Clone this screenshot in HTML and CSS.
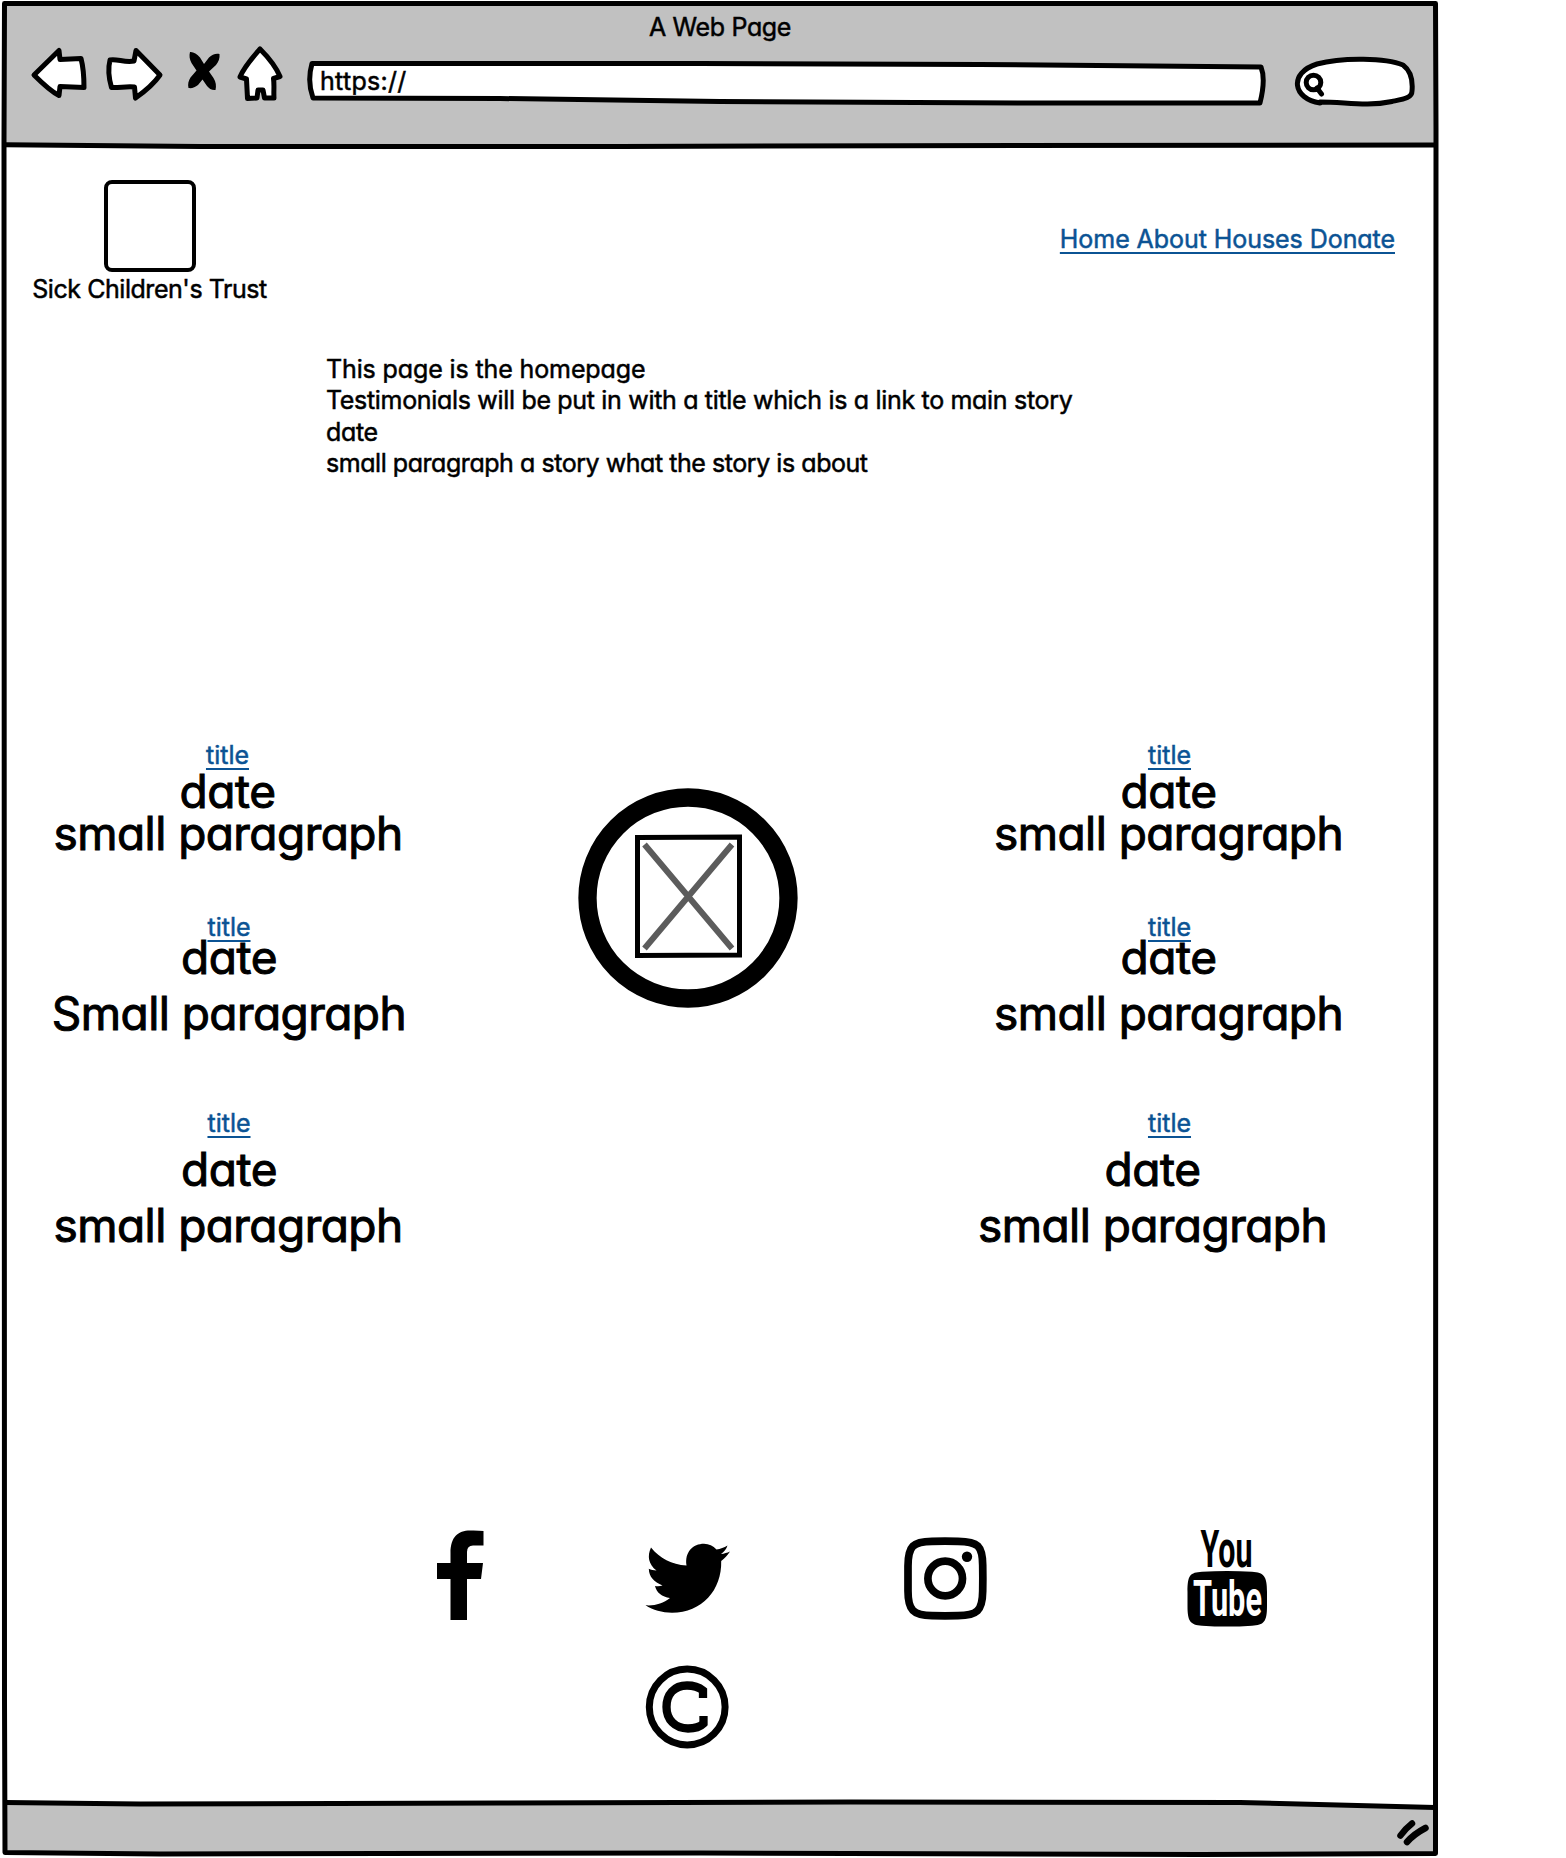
FILE: index.html
```html
<!DOCTYPE html>
<html lang="en">
<head>
<meta charset="utf-8">
<title>A Web Page</title>
<link rel="stylesheet" href="styles.css">
</head>
<body>
<div class="window">
  <svg class="frame" width="1440" height="1858" viewBox="0 0 1440 1858" aria-hidden="true">
    <path class="chrome" d="M4 3H1436V145L800 146L200 146.500L4 144.500Z"/>
    <path class="chrome" d="M4 1802.500L200 1804L700 1802L1240 1802.500L1436 1807.500V1854L700 1854.500L200 1853.500L4 1852.500Z"/>
    <path class="ink" d="M4.500 3.500H1435.500L1436 130L1435.500 1853.500L1200 1854.500L700 1853L160 1854L5 1852.500L4.500 1700L4 140Z"/>
    <path class="ink" d="M5 144.800L200 146.500L620 146.500L900 145.700L1436 145"/>
    <path class="ink" d="M5 1802.500L140 1804L500 1803L850 1802L1240 1802.500L1435 1807.500"/>
    <path class="grip" d="M1400.500 1835.500Q1405 1829 1412 1823.500M1407 1842Q1414 1834 1425.500 1828"/>
  </svg>

  <header class="browser-bar">
    <div class="window-title"><span>A Web Page</span></div>
    <div class="toolbar">
      <svg class="back" width="58" height="56" viewBox="30 46 58 56"><path class="tool" d="M34 75L59 50.500L60 59.500L81 58.500C83 66 84 77 84 87.500L60 86.500L59 95.500C50 91 42 83 34 75Z"/></svg>
      <svg class="forward" width="60" height="56" viewBox="104 46 60 56"><path class="tool" d="M110 60C117 58.500 125 63 134 61L136 50.500L160 75C153 85 144 92 135.500 98L134.500 87C127 86 119 88 111.500 87.500C109 79 108 68 110 60Z"/></svg>
      <svg class="stop" width="34" height="42" viewBox="187 50 34 42"><path d="M190 52C193 51.500 197 54 200 57.500L204 64L209 57.500C212 54.500 216 53 219.500 54C220 58 218.500 62 216 65L209 71.500L213.500 78C216 82 216.500 86 215.500 90C212 90.500 209 88.500 207 86L202.500 79.500L198 85C195 87.500 192 88.500 188.500 88C187.500 84.500 188.500 80.500 190.500 77.500L196.500 70.500L191.500 63C189.500 59.500 189 55.500 190 52Z"/></svg>
      <svg class="home" width="48" height="58" viewBox="236 45 48 58"><path class="tool" d="M260 49C269 58 276 67 280 76.500L273.500 78.500C274.500 85 273.500 92 274 98H264.500L263 90H258L257 98L247.500 98.500L246.500 79L240 77C244 67 253 57 260 49Z"/></svg>
      <div class="address">
        <svg width="960" height="48" viewBox="306 59 960 48"><path class="tool" d="M312 63.500H700L980 64.500L1261 67C1265 77 1263 91 1260 103L1020 103L720 101.500L500 98.500L313 98C309 87 309 74 312 63.500Z"/></svg>
        <span>https://</span>
      </div>
      <svg class="search" width="122" height="52" viewBox="1294 56 122 52"><path class="tool" d="M1320 103C1293 99 1288 73 1317 64C1343 57 1386 58 1403 65C1411 71 1413 80 1412 91C1412 98 1404 99 1392 101.500C1366 107 1346 102 1320 102Z"/><circle class="lens" cx="1313.500" cy="82.500" r="7.300"/><path class="lens" d="M1317 88L1321.500 94"/></svg>
    </div>
  </header>

  <div class="site-head">
    <div class="brand"><div class="logo"></div><span>Sick Children's Trust</span></div>
    <nav><a>Home About Houses Donate</a></nav>
  </div>

  <div class="intro">
    <p class="lead">This page is the homepage</p>
    <p>Testimonials will be put in with a title which is a link to main story</p>
    <p>date</p>
    <p class="summary">small paragraph a story what the story is about</p>
  </div>

  <main class="stories">
    <div class="column left">
      <article class="story first"><a>title</a><h2>date</h2><p>small paragraph</p></article>
      <article class="story second"><a>title</a><h2>date</h2><p>Small paragraph</p></article>
      <article class="story third"><a>title</a><h2>date</h2><p>small paragraph</p></article>
    </div>
    <svg class="picture" width="220" height="220" viewBox="578 787.500 220 220">
      <circle class="ring" cx="688" cy="897.500" r="100.500"/>
      <path class="cross" d="M644.500 844L732 948M732 844L644.500 948"/>
      <path class="ink square" d="M637.500 837L739.500 836.500V954.500L637.500 955Z"/>
    </svg>
    <div class="column right">
      <article class="story first"><a>title</a><h2>date</h2><p>small paragraph</p></article>
      <article class="story second"><a>title</a><h2>date</h2><p>small paragraph</p></article>
      <article class="story third shifted"><a>title</a><h2>date</h2><p>small paragraph</p></article>
    </div>
  </main>

  <footer>
    <div class="social">
      <svg width="48" height="98" viewBox="437 1530 48 98"><path d="M450.500 1620V1579H437V1563H450.500V1553C450.500 1537 458 1530.500 470 1530.500Q478 1530.300 483.500 1531V1545.500H473Q467 1545.500 467 1552V1563H483L481 1579H467V1620Z"/></svg>
      <svg width="86" height="98" viewBox="645 1530 86 98"><path d="M645.500 1605.300C655 1606 663 1603.500 670 1598C662 1597 656.500 1592.500 655 1586C658 1586.500 660 1586.300 662.500 1585.500C654 1582 649 1577 648.800 1568.800C651 1570 653.500 1570.500 656.500 1570.500C648.500 1564.500 647 1556 651 1547.500C660 1558.500 671.500 1564.500 686.500 1565.500C684.500 1552 693 1543.800 704 1543.800C709 1543.800 713 1546 716.500 1549.500C720.500 1549 724 1547.500 727.500 1545.500C726.500 1549 724 1552 721 1554C724.500 1553.700 727 1552.800 730 1551.500C727.500 1555.500 724.500 1558.500 721.200 1561C722 1590 702 1612.800 672 1612.800C662 1612.800 653 1610 645.500 1605.300Z"/></svg>
      <svg width="84" height="98" viewBox="904 1530 84 98"><path class="insta" d="M908 1566C908 1546 913 1541.500 932 1541.300Q945 1541 958 1541.300C978 1541.500 982.500 1546 982.700 1565Q983 1579 982.700 1591C982.500 1611 977 1615.500 958 1615.700Q945 1616 932 1615.700C913 1615.500 908 1610 908 1591Z"/><circle class="insta" cx="945.200" cy="1578.500" r="17.300"/><circle cx="967" cy="1556.700" r="5.200"/></svg>
      <svg class="youtube" width="82" height="98" viewBox="1187 1530 82 98"><text class="tube you" x="1200.500" y="1567" textLength="52" lengthAdjust="spacingAndGlyphs">You</text><path d="M1187.500 1592C1187.500 1575 1190 1572.500 1202 1571.700Q1227 1570.500 1252 1571.700C1264 1572.500 1267 1576 1267 1592V1606C1267 1622 1264 1625 1252 1625.700Q1227 1627.500 1202 1625.700C1190 1625 1187.500 1621 1187.500 1606Z"/><text class="tube light" x="1193" y="1616" textLength="69" lengthAdjust="spacingAndGlyphs">Tube</text></svg>
    </div>
    <svg class="copyright" width="84" height="84" viewBox="645 1664.500 84 84"><circle class="c-ring" cx="687.200" cy="1706.500" r="37.900"/><path class="c-arc" d="M703 1697.500V1690C698 1686 692 1685 687 1685C674 1685 666.500 1694 666.500 1706.500C666.500 1719 675 1728 688 1728C694 1728 700 1726.500 703.500 1723V1715.500"/></svg>
  </footer>
</div>
</body>
</html>
```
FILE: styles.css
```css
* { box-sizing: border-box; }
body {
  margin: 0;
  background: #fff;
  color: #000;
  font-family: Inter, "Open Sans", sans-serif;
  font-feature-settings: "cv11";
  font-size: 25px;
  line-height: 30px;
  white-space: nowrap;
  -webkit-text-stroke: 0.500px currentColor;
}
h2, p { margin: 0; font-weight: 400; }
svg { display: block; flex: none; -webkit-text-stroke: 0; }
.window { position: relative; width: 1440px; height: 1858px; overflow: hidden; }
.frame { position: absolute; inset: 0; z-index: -1; }
.chrome { fill: #c1c1c1; }
.ink { fill: none; stroke: #000; stroke-width: 5; stroke-linejoin: round; }
.grip { fill: none; stroke: #000; stroke-width: 6.500; stroke-linecap: round; }

.browser-bar { height: 147px; padding-top: 12px; }
.window-title { text-align: center; height: 33px; letter-spacing: -0.350px; }
.toolbar { display: flex; align-items: flex-start; padding-left: 30px; }
.tool { fill: #fff; stroke: #000; stroke-width: 5; stroke-linejoin: round; }
.back, .forward { margin-top: 1px; }
.forward { margin-left: 16px; }
.stop { margin: 5px 0 0 23px; }
.home { margin-left: 15px; }
.address { display: grid; margin: 14px 0 0 22px; }
.address > * { grid-area: 1 / 1; }
.address span { padding: 7px 0 0 14px; letter-spacing: 0.300px; }
.search { margin: 11px 0 0 28px; }
.lens { fill: none; stroke: #000; stroke-width: 5; stroke-linecap: round; }

.site-head { display: flex; justify-content: space-between; padding: 33px 45px 0 32px; height: 207px; }
.brand { display: flex; flex-direction: column; align-items: center; width: 235px; letter-spacing: -0.450px; }
.logo { width: 92px; height: 92px; border: 4px solid #000; border-radius: 8px; margin-bottom: 2px; }
a { color: #0b5394; text-decoration: underline; text-decoration-thickness: 1.500px; text-underline-offset: 4px; text-decoration-skip-ink: none; }
nav { padding-top: 44px; letter-spacing: -0.060px; }

.intro { padding: 0.200px 0 0 326px; line-height: 31.300px; height: 391px; letter-spacing: -0.320px; }
.lead { letter-spacing: -0.120px; }
.summary { letter-spacing: -0.450px; }

.stories { display: grid; grid-template-columns: 458px 1fr 543px; height: 599px; }
.column { display: flex; flex-direction: column; text-align: center; }
.picture { margin: 42.500px 0 0 120px; }
.ring { fill: none; stroke: #000; stroke-width: 18.300; }
.cross { stroke: #5c5c5c; stroke-width: 6; }
.square { stroke-linejoin: miter; }
.story a { display: block; line-height: 20px; }
.story h2, .story p { font-size: 46px; line-height: 42px; letter-spacing: -0.550px; -webkit-text-stroke-width: 1px; }
.story h2 { letter-spacing: -0.400px; }
.first { height: 108.500px; margin-bottom: 63px; }
.first h2 { margin-top: 4.500px; }
.left .first a, .left .first h2 { padding-right: 3px; }
.left .first p, .left .third p { padding-right: 2px; }
.right .story a { padding-left: 2px; }
.second { margin-bottom: 78.500px; }
.second h2 { margin-top: -0.500px; }
.second p { margin-top: 14px; }
.third h2 { margin-top: 15.500px; }
.third p { margin-top: 13.500px; }
.shifted h2, .shifted p { padding-right: 32px; }

footer { padding-top: 185.500px; }
.social { display: grid; grid-template-columns: 208px 259px 283px 82px; padding-left: 437px; }
.insta { fill: none; stroke: #000; stroke-width: 7.700; }
.youtube { overflow: visible; }
.tube { font-family: Roboto, sans-serif; font-weight: 700; font-size: 50px; }
.you { font-size: 52px; }
.light { fill: #fff; }
.copyright { margin: 37.500px 0 0 645px; }
.c-ring { fill: none; stroke: #000; stroke-width: 7; }
.c-arc { fill: none; stroke: #000; stroke-width: 8.300; }
```
